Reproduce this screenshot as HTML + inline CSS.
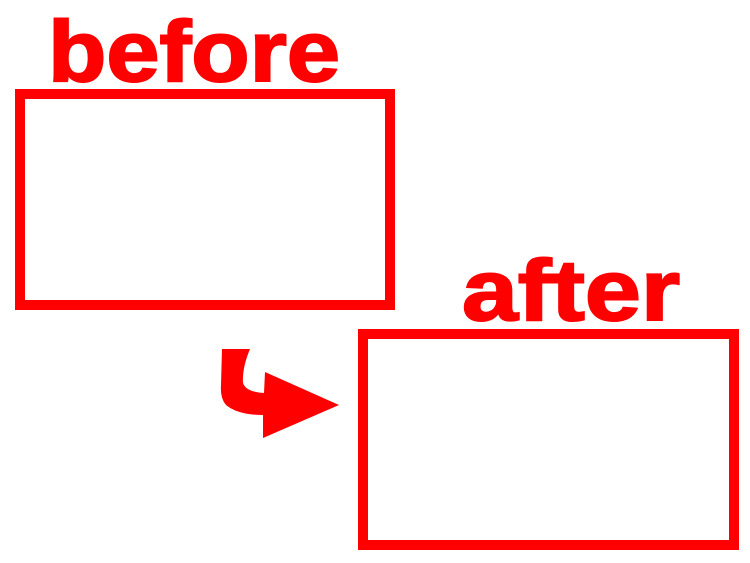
<!DOCTYPE html>
<html><head><meta charset="utf-8"><style>
html,body{margin:0;padding:0;background:#fff;width:750px;height:563px;overflow:hidden}
</style></head><body>
<svg width="750" height="563" viewBox="0 0 750 563" xmlns="http://www.w3.org/2000/svg">
<rect x="20" y="94" width="370" height="211" fill="none" stroke="#ff0000" stroke-width="10"/>
<rect x="363" y="334" width="371" height="211" fill="none" stroke="#ff0000" stroke-width="10"/>
<text x="48" y="81" font-family="Liberation Sans, sans-serif" font-weight="bold" font-size="86" fill="#ff0000" textLength="292" lengthAdjust="spacingAndGlyphs" stroke="#ff0000" stroke-width="2">before</text>
<text x="462" y="320" font-family="Liberation Sans, sans-serif" font-weight="bold" font-size="86" fill="#ff0000" textLength="218" lengthAdjust="spacingAndGlyphs" stroke="#ff0000" stroke-width="2">after</text>
<path d="M222 349 L250 349 Q242 368 243 383 Q246 392 264 393 L265 372 L339 405 L263 438 L263 415 Q238 415 226 405 Q220 398 221 385 Z" fill="#ff0000"/>
</svg>
</body></html>
